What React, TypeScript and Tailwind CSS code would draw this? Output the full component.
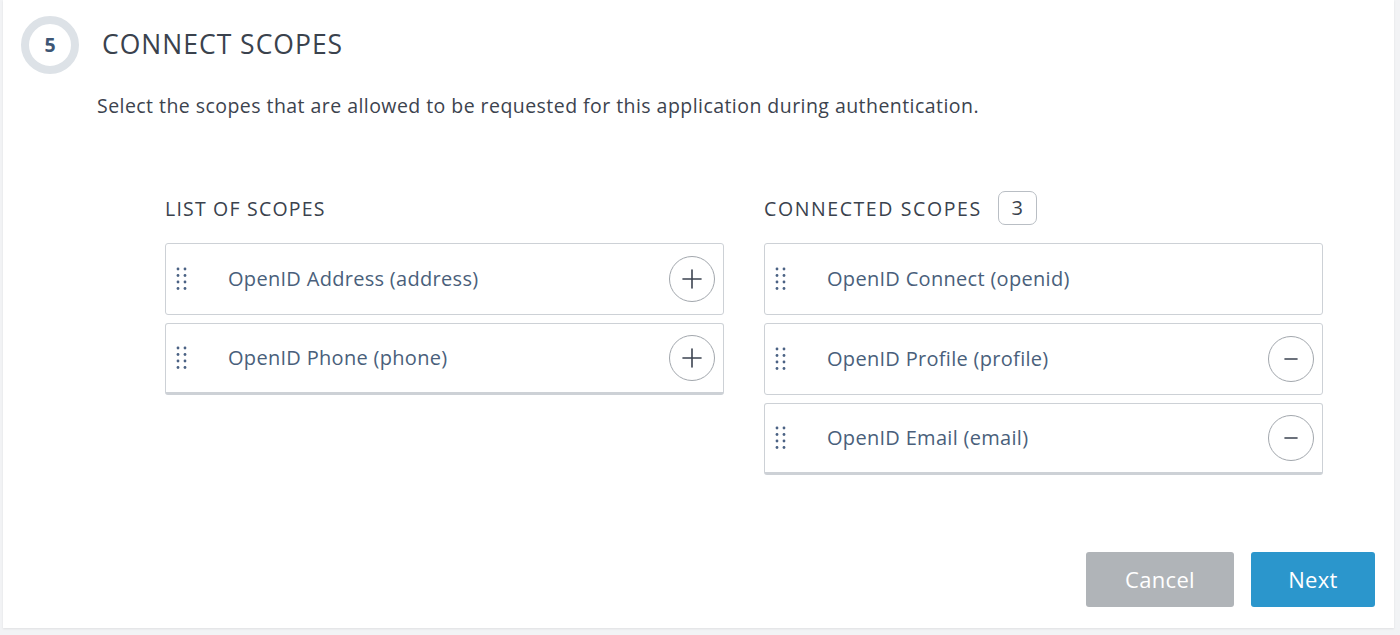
import React from 'react';

const available = ['OpenID Address (address)', 'OpenID Phone (phone)'];
const connected = [
  { label: 'OpenID Connect (openid)', removable: false },
  { label: 'OpenID Profile (profile)', removable: true },
  { label: 'OpenID Email (email)', removable: true },
];

function DragDots() {
  return (
    <svg width="12" height="24" viewBox="0 0 12 24" className="text-[#4b6284] shrink-0">
      {[0, 1, 2, 3].map((r) =>
        [0, 1].map((c) => <circle key={`${r}-${c}`} cx={2 + c * 7} cy={2 + r * 6.5} r="1.4" fill="currentColor" />),
      )}
    </svg>
  );
}

function RoundButton({ kind }: { kind: 'add' | 'remove' }) {
  return (
    <button className="flex h-[46px] w-[46px] items-center justify-center rounded-full border border-[#a2a7ad] bg-white text-[#3b4350]">
      <svg width="22" height="22" viewBox="0 0 22 22" stroke="currentColor" strokeWidth="1.6" strokeLinecap="round">
        {kind === 'add' && <line x1="11" y1="2" x2="11" y2="20" />}
        <line x1={kind === 'add' ? 2 : 5} y1="11" x2={kind === 'add' ? 20 : 17} y2="11" />
      </svg>
    </button>
  );
}

function ScopeRow({ label, action, last }: { label: string; action?: 'add' | 'remove'; last?: boolean }) {
  return (
    <div
      className={`flex h-[72px] items-center rounded-[3px] border border-[#cdd1d6] bg-white pl-[10px] pr-[8px] ${
        last ? 'border-b-[3px]' : ''
      }`}
    >
      <DragDots />
      <span className="ml-[40px] flex-1 text-[20px] tracking-[0.3px] text-[#4a5f7b]">{label}</span>
      {action && <RoundButton kind={action} />}
    </div>
  );
}

export default function App(): React.ReactElement {
  return (
    <div className="min-h-[635px] bg-[#f2f3f5] pl-[3px] pr-[6px] font-['Open_Sans',sans-serif]">
      <div className="h-[628px] bg-white shadow-[0_1px_2px_rgba(0,0,0,0.08)]">
        {/* Step header */}
        <div className="flex items-center pl-[18px] pt-[16px]">
          <div className="flex h-[58px] w-[58px] items-center justify-center rounded-full border-[8px] border-[#dde2e7] bg-white text-[19.5px] font-bold text-[#3e5675]">
            5
          </div>
          <h1 className="ml-[23px] text-[26.5px] font-normal tracking-[1px] text-[#3a424d]">CONNECT SCOPES</h1>
        </div>
        <p className="ml-[94px] mt-[17px] text-[19.5px] tracking-[0.45px] text-[#3c434e]">
          Select the scopes that are allowed to be requested for this application during authentication.
        </p>

        {/* Scope lists */}
        <div className="mt-[71px] flex gap-[40px] pl-[162px]">
          <div className="w-[559px]">
            <div className="flex h-[34px] items-center text-[19.5px] tracking-[1.2px] text-[#3a424d]">LIST OF SCOPES</div>
            <div className="mt-[18px] flex flex-col gap-[8px]">
              {available.map((s, i) => (
                <ScopeRow key={s} label={s} action="add" last={i === available.length - 1} />
              ))}
            </div>
          </div>
          <div className="w-[559px]">
            <div className="flex h-[34px] items-center gap-[16px] text-[19.5px] tracking-[1.6px] text-[#3a424d]">
              <span>CONNECTED SCOPES</span>
              <span className="flex h-[34px] w-[39px] items-center justify-center rounded-[7px] border border-[#b9bec4] text-[20px] tracking-normal">
                3
              </span>
            </div>
            <div className="mt-[18px] flex flex-col gap-[8px]">
              {connected.map((s, i) => (
                <ScopeRow
                  key={s.label}
                  label={s.label}
                  action={s.removable ? 'remove' : undefined}
                  last={i === connected.length - 1}
                />
              ))}
            </div>
          </div>
        </div>

        {/* Footer */}
        <div className="mt-[77px] flex justify-end gap-[17px] pr-[19px]">
          <button className="h-[55px] w-[148px] rounded-[3px] bg-[#b0b4b8] text-[22px] tracking-[0.3px] text-white">Cancel</button>
          <button className="h-[55px] w-[124px] rounded-[3px] bg-[#2b96cc] text-[22px] tracking-[0.3px] text-white">Next</button>
        </div>
      </div>
    </div>
  );
}
